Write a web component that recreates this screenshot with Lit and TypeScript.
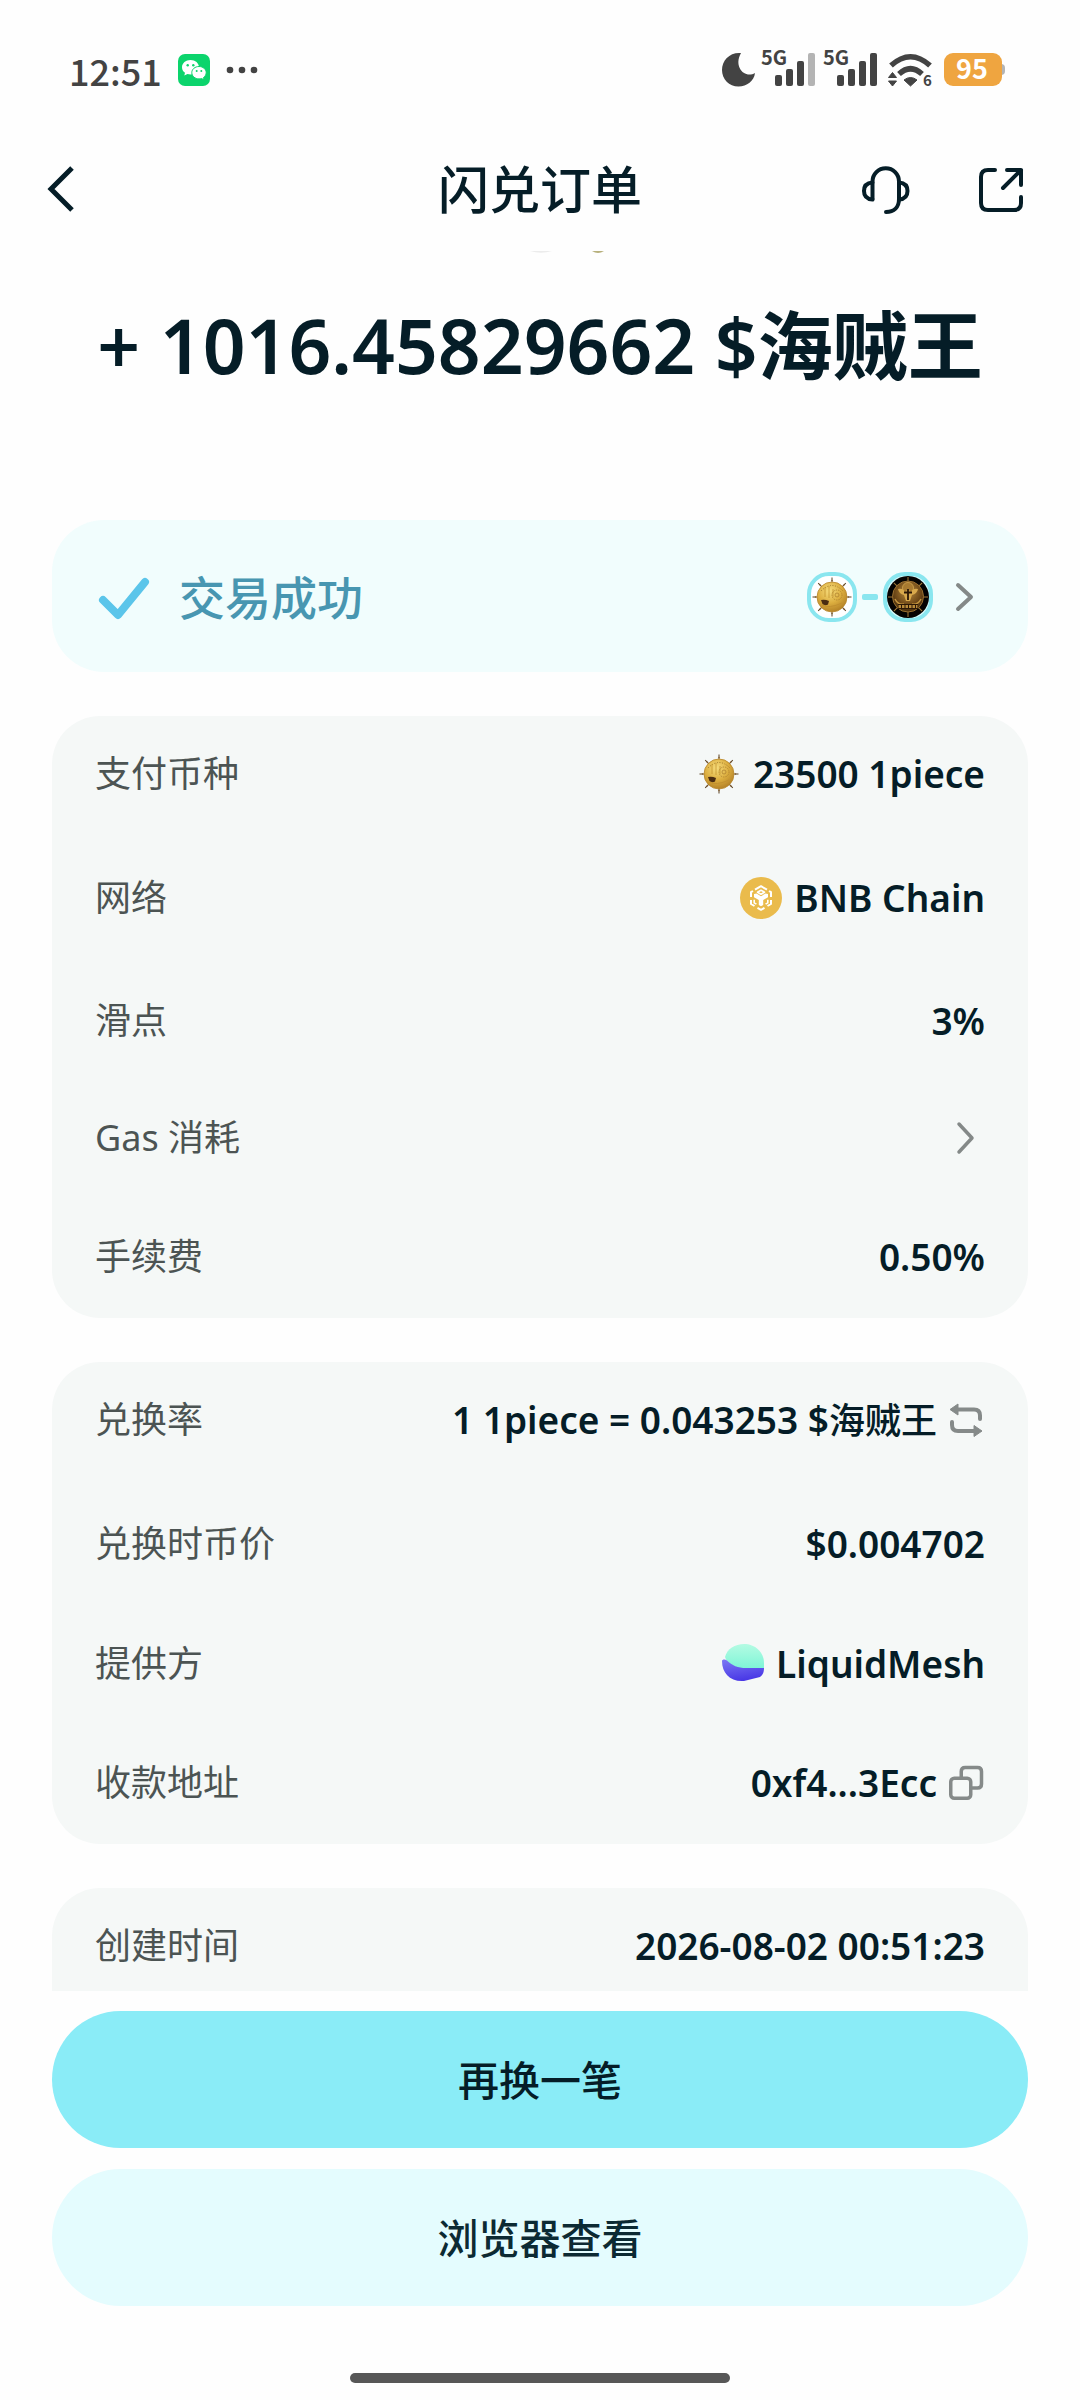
import { LitElement, css, html, svg, nothing, type TemplateResult } from "lit";
import { customElement, property } from "lit/decorators.js";
import { classMap } from "lit/directives/class-map.js";

/* ---------- icons ---------- */

const spokes = [0, 45, 90, 135, 180, 225, 270, 315];

const coinArt = svg`
  <defs>
    <radialGradient id="gold" cx="0.42" cy="0.3" r="0.8">
      <stop offset="0" stop-color="#f6dc7c"></stop>
      <stop offset="0.5" stop-color="#dcae3f"></stop>
      <stop offset="1" stop-color="#a8741f"></stop>
    </radialGradient>
  </defs>
  ${spokes.map(
    (a) => svg`<g transform="rotate(${a} 20 20)">
      <path d="M20 0.500V6" stroke="#5a4020" stroke-width="1"></path>
      <circle cx="20" cy="3.500" r="0.700" fill="#7b5526"></circle>
    </g>`
  )}
  <circle cx="20" cy="20" r="15" fill="url(#gold)" stroke="#b8862c" stroke-width="0.800"></circle>
  <path d="M9 14Q20 3 31 14" fill="none" stroke="#8a6420" stroke-width="0.800" stroke-dasharray="1 1.600"></path>
  <path d="M13 10V20M17 9V21M21 12V20" stroke="#c4952f" stroke-width="0.800"></path>
  <circle cx="25" cy="18" r="5" fill="none" stroke="#b08330" stroke-width="0.900" stroke-dasharray="1.400 1"></circle>
  <circle cx="25" cy="18" r="2" fill="none" stroke="#b08330" stroke-width="0.800"></circle>
  <path d="M9 23q4-1 8 1l-1 3.500q-3 1.500-5.500-.5z" fill="#4a2c12"></path>
  <path d="M10 28q7 4 20-2" fill="none" stroke="#c2902f" stroke-width="1"></path>
`;

const goldCoin = html`<svg class="i44" viewBox="-2 -2 44 44" aria-hidden="true">${coinArt}</svg>`;

const ringGoldCoin = html`<svg class="i50" viewBox="-5 -5 50 50" aria-hidden="true">
  <rect x="-3" y="-3" width="46" height="46" rx="20" fill="#fff" stroke="#8ae6ef" stroke-width="4"></rect>
  ${coinArt}
</svg>`;

const ringDarkCoin = html`<svg class="i50" viewBox="0 0 50 50" aria-hidden="true">
  <defs>
    <radialGradient id="bronze" cx="0.5" cy="0.35" r="0.7">
      <stop offset="0" stop-color="#b98a3a"></stop>
      <stop offset="0.6" stop-color="#6e4818"></stop>
      <stop offset="1" stop-color="#3a2409"></stop>
    </radialGradient>
  </defs>
  <rect x="2" y="2" width="46" height="46" rx="20" fill="#d8fbfd" stroke="#8ae6ef" stroke-width="4"></rect>
  <circle cx="25" cy="25" r="21" fill="#050302"></circle>
  ${spokes.map((a) => svg`<path d="M25 5V10" stroke="#a57b3a" stroke-width="1" transform="rotate(${a} 25 25)"></path>`)}
  <circle cx="25" cy="24.500" r="15.500" fill="url(#bronze)" stroke="#9a7030" stroke-width="1"></circle>
  <circle cx="25" cy="16" r="5.500" fill="#a87a30" stroke="#c79a48" stroke-width="1"></circle>
  <path d="M15 17q5-1 7 3l3-3 3 3q2-4 7-3-1 5-6 6l-2 6h-4l-2-6q-5-1-6-6z" fill="#d9a94c"></path>
  <path d="M25 17V28M21 20.500h8" stroke="#2c1806" stroke-width="1.800"></path>
  <path d="M12 27q3 6 9 5M38 27q-3 6-9 5" fill="none" stroke="#c4953f" stroke-width="1.500"></path>
  <path d="M15 34.500h20" stroke="#2c1806" stroke-width="5"></path>
  <path d="M15.500 34.500h19" stroke="#b88a3a" stroke-width="3" stroke-dasharray="2.500 1"></path>
</svg>`;

const bnbIcon = html`<svg class="i42" viewBox="0 0 42 42" aria-hidden="true">
  <circle cx="21" cy="21" r="21" fill="#eabb4c"></circle>
  <g fill="none" stroke="#fff" stroke-width="2" stroke-linejoin="round">
    <path d="M15 12.700L21 9.200l6 3.500M29 14l2 1.200V20M31 23v4l-3.500 2M24.500 30.800L21 32.800l-3.500-2M14.500 29L11 27v-4M11 20v-4.800L13 14"></path>
    <path d="M17.500 15.200L21 13.200l3.500 2L21 17.200z" stroke-width="1.600"></path>
    <path d="M14.200 22.800v3l2.200 1.300M27.800 22.800v3l-2.200 1.300" stroke-width="1.600"></path>
  </g>
  <path d="M14 17l2.500-.5L21 19.200l4.500-2.700L28 17v3.200L23.200 23v5L21 29.300 18.800 28v-5L14 20.200z" fill="#fff"></path>
</svg>`;

const liquidMeshIcon = html`<svg class="i42" viewBox="0 0 42 42" aria-hidden="true">
  <defs>
    <linearGradient id="mint" x1="0" y1="0" x2="0" y2="1">
      <stop offset="0" stop-color="#b4fbe3"></stop>
      <stop offset="1" stop-color="#7df5d6"></stop>
    </linearGradient>
    <linearGradient id="violet" x1="0" y1="0" x2="0.3" y2="1">
      <stop offset="0" stop-color="#7b78f3"></stop>
      <stop offset="1" stop-color="#4a39e6"></stop>
    </linearGradient>
  </defs>
  <path d="M3 14C5 6 13 1 22 1c11 0 20 8 20 19v6H22C12 25 5 20 3 14z" fill="url(#mint)"></path>
  <path d="M0 18c0-1.500 3-2 5-.5 5 5 11 7.500 19 7.500h18c0 4-1 7-4 9l-16 4C8 39 0 30 0 18z" fill="url(#violet)"></path>
</svg>`;

const swapIcon = html`<svg class="i36" viewBox="0 0 36 36" aria-hidden="true">
  <g fill="none" stroke="#858a89" stroke-width="4" stroke-linecap="round">
    <path d="M8 7.500H25q6 0 6 6V17"></path>
    <path d="M3 20v3q0 6 6 6H26"></path>
  </g>
  <g fill="#858a89" stroke="#858a89" stroke-width="1" stroke-linejoin="round">
    <path d="M1 7.500L9 2V13z"></path>
    <path d="M33 29L25 23.500V34.500z"></path>
  </g>
</svg>`;

const copyIcon = html`<svg class="i36" viewBox="0 0 36 36" aria-hidden="true">
  <g fill="none" stroke="#858a89" stroke-width="3.500">
    <rect x="1.750" y="13.250" width="20" height="20" rx="3.500"></rect>
    <path d="M12.250 13V6.500q0-4 4-4H28.500q4 0 4 4V19q0 4-4 4H22"></path>
  </g>
</svg>`;

const chevron = (height: number, width: number) => html`<svg class="i36" viewBox="0 0 36 36" aria-hidden="true">
  <path d="M10 ${18 - height}L23 18L10 ${18 + height}" fill="none" stroke="#848988" stroke-width=${width}
    stroke-linecap="round" stroke-linejoin="round"></path>
</svg>`;

const backIcon = html`<svg class="i56" viewBox="0 0 56 56" aria-hidden="true">
  <path d="M36 7L15 28L36 49" fill="none" stroke="#051d27" stroke-width="5"></path>
</svg>`;

const headsetIcon = html`<svg class="i56" viewBox="0 0 56 56" aria-hidden="true">
  <g fill="none" stroke="#051d27" stroke-width="4" stroke-linecap="round" stroke-linejoin="round">
    <path d="M14.500 38V20.500a13.250 13.250 0 0 1 26.500 0V38c0 8-5 13-13 13"></path>
    <path d="M14.500 21.500C8 22 6 26 6 30s2 8 8.500 8.500M41 21.500c6.500.5 8.500 4.500 8.500 8.500s-2 8-8.500 8.500"></path>
  </g>
</svg>`;

const shareIcon = html`<svg class="i56" viewBox="0 0 56 56" aria-hidden="true">
  <g fill="none" stroke="#051d27" stroke-width="4" stroke-linecap="round" stroke-linejoin="round">
    <path d="M22 9H15q-7 0-7 7V42q0 7 7 7H41q7 0 7-7V36"></path>
    <path d="M34 9H48V24M48 9L30 27"></path>
  </g>
</svg>`;

const checkIcon = html`<svg class="i56" viewBox="0 0 56 56" aria-hidden="true">
  <path d="M7 31L22 46L49 13" fill="none" stroke="#5bc5ea" stroke-width="8" stroke-linecap="round" stroke-linejoin="round"></path>
</svg>`;

const signalIcon = (strength: number) => html`<svg class="signal" viewBox="0 0 56 40" role="img" aria-label="信号">
  <text x="0" y="15" class="signal-text">5G</text>
  ${[25, 19, 11, 3].map(
    (top, i) => svg`<rect x=${14 + i * 11} y=${top} width="7" height=${36 - top} rx="2"
      fill=${i < strength ? "#434343" : "#b4b4b4"}></rect>`
  )}
</svg>`;

const wechatIcon = html`<svg class="i32" viewBox="0 0 32 32" role="img" aria-label="微信">
  <rect width="32" height="32" rx="7" fill="#0bd46c"></rect>
  <path d="M12.500 6C7.700 6 4 9.200 4 13.200c0 2.300 1.200 4.200 3 5.500L6.300 21.500l3.200-1.600c1 .3 2 .5 3 .5 4.800 0 8.500-3.200 8.500-7.200S17.300 6 12.500 6z" fill="#fff"></path>
  <path d="M21 12.500c-4 0-7.200 2.700-7.200 6.200 0 3.400 3.200 6.200 7.200 6.200.9 0 1.800-.1 2.600-.4l2.500 1.400-.6-2.400c1.600-1.200 2.700-2.900 2.700-4.800 0-3.500-3.200-6.200-7.200-6.200z" fill="#fff" stroke="#0bd46c" stroke-width="1"></path>
  <g fill="#0bd46c">
    <circle cx="9.700" cy="11.300" r="1.200"></circle>
    <circle cx="15.300" cy="11.300" r="1.200"></circle>
    <circle cx="18.700" cy="17" r="1"></circle>
    <circle cx="23.300" cy="17" r="1"></circle>
  </g>
</svg>`;

/* ---------- status bar ---------- */

@customElement("status-bar")
class StatusBar extends LitElement {
  static styles = css`
    :host {
      display: flex;
      align-items: center;
      justify-content: space-between;
      height: 60px;
      padding: 40px 75px 0 69px;
      color: #434343;
    }
    .side {
      display: flex;
      align-items: center;
    }
    .left {
      gap: 16px;
    }
    .right {
      gap: 6px;
    }
    .clock {
      font: 500 36px/60px "Noto Sans CJK SC", sans-serif;
    }
    svg {
      display: block;
      height: 40px;
      overflow: visible;
    }
    .i32 {
      width: 32px;
      height: 32px;
    }
    .dots {
      width: 32px;
    }
    .moon {
      width: 34px;
    }
    .signal {
      width: 56px;
    }
    .wifi {
      width: 52px;
    }
    .battery {
      width: 62px;
    }
    .signal-text {
      font: 700 20px "Noto Sans CJK SC", sans-serif;
      fill: #434343;
    }
    .wifi-text {
      font: 700 15px "Noto Sans CJK SC", sans-serif;
      fill: #434343;
    }
    .battery-text {
      font: 700 27px "Noto Sans CJK SC", sans-serif;
      fill: #fff;
      text-anchor: middle;
    }
  `;

  render() {
    return html`
      <div class="side left">
        <time class="clock">12:51</time>
        ${wechatIcon}
        <svg class="dots" viewBox="0 0 32 40" aria-hidden="true">
          ${[4, 16, 28].map((x) => svg`<circle cx=${x} cy="20" r="3.300" fill="#434343"></circle>`)}
        </svg>
      </div>
      <div class="side right">
        <svg class="moon" viewBox="0 0 34 40" role="img" aria-label="勿扰">
          <path d="M20 3C9 2 1 10 1 20c0 9 7 16.500 16.500 16.500C26 36.500 33 31 34 23 24 29 12 17 20 3z" fill="#434343"></path>
        </svg>
        ${signalIcon(3)} ${signalIcon(4)}
        <svg class="wifi" viewBox="0 0 52 40" role="img" aria-label="无线网络">
          <g fill="none" stroke="#434343" stroke-width="5.500">
            <path d="M6 15.500Q25.500-2 45 15.500"></path>
            <path d="M14 24Q25.500 13.500 37 24"></path>
          </g>
          <path d="M19 30q6.500-5 13 0L25.500 36z" fill="#434343" stroke="#434343" stroke-width="1" stroke-linejoin="round"></path>
          <path d="M3.500 27.500L7.500 22.500L11.500 27.500zM3.500 31H11.500L7.500 36z" fill="#434343" stroke="#434343" stroke-linejoin="round"></path>
          <text class="wifi-text" x="38" y="36">6</text>
        </svg>
        <svg class="battery" viewBox="0 0 62 40" role="img" aria-label="电量">
          <rect x="54" y="14" width="8" height="11" rx="4" fill="#b4b4b4"></rect>
          <rect x="1" y="3" width="58" height="33" rx="9" fill="#efa540"></rect>
          <text class="battery-text" x="29" y="29">95</text>
        </svg>
      </div>
    `;
  }
}

/* ---------- detail card ---------- */

interface DetailRow {
  label: string;
  value?: string | TemplateResult;
  lead?: TemplateResult;
  action?: TemplateResult;
  actionLabel?: string;
  size: "regular" | "spaced" | "relaxed";
}

@customElement("detail-card")
class DetailCard extends LitElement {
  static styles = css`
    :host {
      display: block;
    }
    .card {
      margin: 0;
      padding-bottom: 2px;
      border-radius: 48px;
      background: #f5f8f7;
    }
    .open {
      border-bottom-left-radius: 0;
      border-bottom-right-radius: 0;
    }
    .row {
      box-sizing: border-box;
      display: flex;
      align-items: center;
      justify-content: space-between;
      min-height: 116px;
      padding: 0 43px;
      line-height: 52px;
    }
    .spaced {
      min-height: 128px;
      padding-top: 4px;
    }
    .relaxed {
      min-height: 120px;
      padding-top: 2px;
    }
    .label {
      color: #4c5453;
      font-size: 36px;
    }
    .value {
      display: flex;
      align-items: center;
      gap: 12px;
      margin: 0;
      color: #051d27;
      font-size: 37px;
      font-weight: 600;
    }
    .token {
      font-size: 36px;
      font-weight: 500;
    }
    .action {
      padding: 0;
      border: 0;
      background: none;
      cursor: pointer;
    }
    svg {
      display: block;
      flex: none;
    }
    .i36 {
      width: 36px;
      height: 36px;
    }
    .i42 {
      width: 42px;
      height: 42px;
    }
    .i44 {
      width: 44px;
      height: 44px;
    }
  `;

  @property({ attribute: false }) rows: DetailRow[] = [];
  @property({ type: Boolean }) open = false;

  render() {
    return html`<dl class=${classMap({ card: true, open: this.open })}>
      ${this.rows.map(
        (row) => html`<div class=${classMap({ row: true, [row.size]: true })}>
          <dt class="label">${row.label}</dt>
          <dd class="value">
            ${row.lead ?? nothing}${row.value ? html`<span>${row.value}</span>` : nothing}
            ${row.action
              ? html`<button class="action" type="button" aria-label=${row.actionLabel ?? row.label}>${row.action}</button>`
              : nothing}
          </dd>
        </div>`
      )}
    </dl>`;
  }
}

/* ---------- page ---------- */

const paymentRows: DetailRow[] = [
  { label: "支付币种", value: "23500 1piece", lead: goldCoin, size: "regular" },
  { label: "网络", value: "BNB Chain", lead: bnbIcon, size: "spaced" },
  { label: "滑点", value: "3%", size: "relaxed" },
  { label: "Gas 消耗", action: chevron(14, 3.5), size: "regular" },
  { label: "手续费", value: "0.50%", size: "relaxed" },
];

const rateRows: DetailRow[] = [
  {
    label: "兑换率",
    value: html`1 1piece = 0.043253 $<span class="token">海贼王</span>`,
    action: swapIcon,
    actionLabel: "切换",
    size: "regular",
  },
  { label: "兑换时币价", value: "$0.004702", size: "spaced" },
  { label: "提供方", value: "LiquidMesh", lead: liquidMeshIcon, size: "regular" },
  { label: "收款地址", value: "0xf4...3Ecc", action: copyIcon, actionLabel: "复制", size: "relaxed" },
];

const timeRows: DetailRow[] = [{ label: "创建时间", value: "2026-08-02 00:51:23", size: "regular" }];

@customElement("app-root")
class AppRoot extends LitElement {
  static styles = css`
    :host {
      display: block;
      font-family: "Noto Sans", "Noto Sans CJK SC", sans-serif;
      color: #051d27;
    }
    .screen {
      display: flex;
      flex-direction: column;
      height: 100vh;
      background: #fefefe;
    }
    .header {
      display: grid;
      grid-template-columns: 1fr auto 1fr;
      align-items: center;
      height: 124px;
      padding: 27px 36px 0;
    }
    .title {
      margin: 0;
      font-size: 51px;
      font-weight: 500;
      line-height: 72px;
    }
    .tools {
      display: flex;
      justify-content: flex-end;
      gap: 59px;
      padding-right: 15px;
    }
    .icon-button {
      justify-self: start;
      padding: 0;
      border: 0;
      background: none;
      cursor: pointer;
    }
    svg {
      display: block;
      flex: none;
    }
    .i36 {
      width: 36px;
      height: 36px;
    }
    .i50 {
      width: 50px;
      height: 50px;
    }
    .i56 {
      width: 56px;
      height: 56px;
    }
    .content {
      flex: 1;
      min-height: 0;
      overflow: hidden;
      padding: 0 52px;
    }
    .pair {
      width: 136px;
      height: 3px;
      margin: 0 auto;
    }
    .amount {
      margin: 41px 0 125px;
      font-size: 75px;
      font-weight: 600;
      line-height: 100px;
      text-align: center;
      white-space: nowrap;
    }
    .cards {
      display: grid;
      gap: 44px;
    }
    .status {
      display: flex;
      align-items: center;
      justify-content: space-between;
      width: 100%;
      min-height: 152px;
      padding: 2px 44px 0;
      border: 0;
      border-radius: 52px;
      background: #f1fdfd;
      font-family: inherit;
      cursor: pointer;
    }
    .result {
      display: flex;
      align-items: center;
      gap: 27px;
      color: #4896b1;
      font-size: 46px;
      font-weight: 500;
      line-height: 64px;
    }
    .route {
      display: flex;
      align-items: center;
      gap: 5px;
    }
    .dash {
      width: 16px;
      height: 6px;
      border-radius: 2px;
      background: #8ae6ef;
    }
    .more {
      display: flex;
      align-items: center;
      gap: 15px;
    }
    .footer {
      display: grid;
      gap: 21px;
      padding: 20px 52px 17px;
    }
    .button {
      height: 137px;
      padding: 0;
      border: 0;
      border-radius: 69px;
      background: #e4fcfe;
      color: #0c2a33;
      font-family: inherit;
      font-size: 41px;
      font-weight: 500;
      line-height: 60px;
      cursor: pointer;
    }
    .primary {
      background: #8aecf7;
      color: #051d27;
    }
    .home {
      justify-self: center;
      width: 39%;
      height: 10px;
      margin-top: 46px;
      border-radius: 5px;
      background: #575757;
    }
  `;

  render() {
    return html`<div class="screen">
      <status-bar></status-bar>
      <header class="header">
        <button class="icon-button" type="button" aria-label="返回">${backIcon}</button>
        <h1 class="title">闪兑订单</h1>
        <div class="tools">
          <button class="icon-button" type="button" aria-label="客服">${headsetIcon}</button>
          <button class="icon-button" type="button" aria-label="分享">${shareIcon}</button>
        </div>
      </header>
      <main class="content">
        <svg class="pair" viewBox="0 0 136 3" aria-hidden="true">
          <path d="M58 0Q69 3.500 80 0z" fill="#ececec"></path>
          <path d="M120 0Q126 4 132 0z" fill="#b7b07c"></path>
        </svg>
        <p class="amount">+ 1016.45829662 $海贼王</p>
        <div class="cards">
          <button class="status" type="button">
            <span class="result">${checkIcon}<span>交易成功</span></span>
            <span class="more">
              <span class="route">${ringGoldCoin}<span class="dash"></span>${ringDarkCoin}</span>
              ${chevron(12, 4)}
            </span>
          </button>
          <detail-card .rows=${paymentRows}></detail-card>
          <detail-card .rows=${rateRows}></detail-card>
          <detail-card open .rows=${timeRows}></detail-card>
        </div>
      </main>
      <footer class="footer">
        <button class="button primary" type="button">再换一笔</button>
        <button class="button" type="button">浏览器查看</button>
        <div class="home"></div>
      </footer>
    </div>`;
  }
}
